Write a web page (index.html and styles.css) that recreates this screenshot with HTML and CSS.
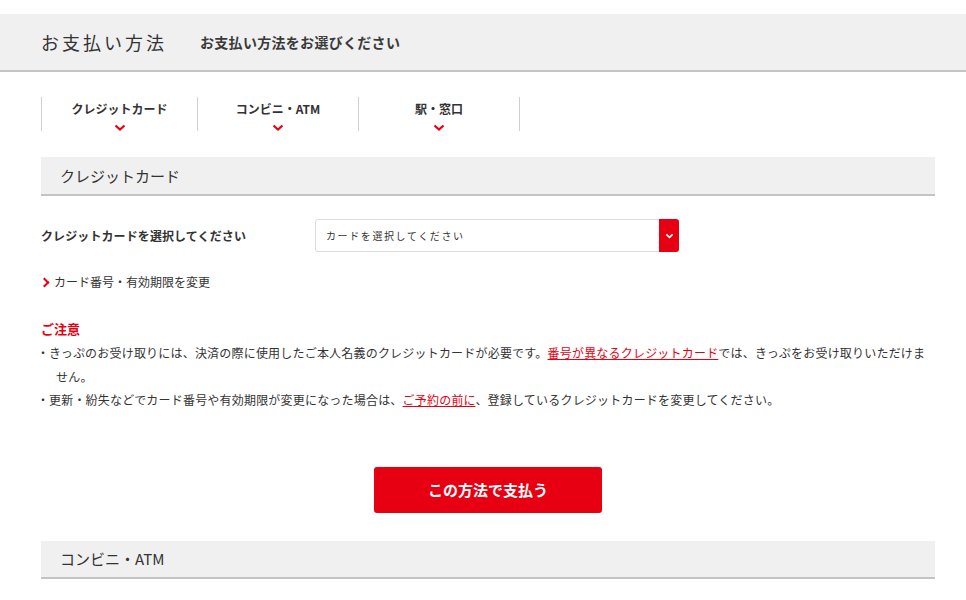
FILE: index.html
```html
<!DOCTYPE html>
<html lang="ja">
<head>
  <meta charset="UTF-8" />
  <title>お支払い方法</title>
  <link rel="stylesheet" href="styles.css">
</head>
<body>

  <header class="page-head">
    <h1>お支払い方法</h1>
    <p>お支払い方法をお選びください</p>
  </header>

  <div class="container">
    <ul class="pay-tabs">
      <li><a href="#card">クレジットカード<svg viewBox="0 0 12 7"><path d="M1.5 1.5 6 5.5 10.5 1.5" /></svg></a></li>
      <li><a href="#cvs">コンビニ・ATM<svg viewBox="0 0 12 7"><path d="M1.5 1.5 6 5.5 10.5 1.5" /></svg></a></li>
      <li><a href="#station">駅・窓口<svg viewBox="0 0 12 7"><path d="M1.5 1.5 6 5.5 10.5 1.5" /></svg></a></li>
    </ul>

    <section id="card">
      <h2 class="section-title">クレジットカード</h2>

      <div class="card-row">
        <label for="cardSelect">クレジットカードを選択してください</label>
        <div class="select-box">
          <select id="cardSelect">
            <option>カードを選択してください</option>
          </select>
          <span class="select-arrow"><svg viewBox="0 0 10 6"><path d="M1.5 1.2 5 4.5 8.5 1.2" /></svg></span>
        </div>
      </div>

      <a class="change-link" href="#">カード番号・有効期限を変更</a>

      <div class="notice">
        <h3>ご注意</h3>
        <ul>
          <li>きっぷのお受け取りには、決済の際に使用したご本人名義のクレジットカードが必要です。<a href="#">番号が異なるクレジットカード</a>では、きっぷをお受け取りいただけません。</li>
          <li>更新・紛失などでカード番号や有効期限が変更になった場合は、<a href="#">ご予約の前に</a>、登録しているクレジットカードを変更してください。</li>
        </ul>
      </div>

      <div class="submit-wrap">
        <button class="pay-button">この方法で支払う</button>
      </div>
    </section>

    <section id="cvs">
      <h2 class="section-title">コンビニ・ATM</h2>
    </section>
  </div>

</body>
</html>
```

FILE: styles.css
```css
* { margin: 0; padding: 0; box-sizing: border-box; }
body {
  font-family: "Noto Sans CJK JP", "Noto Sans", sans-serif;
  color: #333;
  background: #fff;
  padding-top: 14px;
}

a { color: inherit; text-decoration: none; }

.page-head {
  display: flex;
  align-items: center;
  height: 58px;
  padding-left: 41px;
  background: #f0f0f0;
  border-bottom: 2px solid #c4c4c4;
}

.page-head h1 {
  font-size: 18px;
  font-weight: normal;
  letter-spacing: 3px;
  width: 159px;
}

.page-head p {
  font-size: 14px;
  font-weight: bold;
  letter-spacing: 0.3px;
  color: #3a3a3a;
}

.container {
  width: 894px;
  margin-left: 41px;
}

.pay-tabs {
  list-style: none;
  display: grid;
  grid-template-columns: 156px 161px 162px;
  margin-top: 25px;
  height: 34px;
}

.pay-tabs li {
  border-left: 1px solid #d0d0d0;
}

.pay-tabs li:last-child {
  border-right: 1px solid #d0d0d0;
}

.pay-tabs a {
  display: flex;
  flex-direction: column;
  align-items: center;
  font-size: 12px;
  font-weight: bold;
  padding-top: 3px;
  color: #333;
}

.pay-tabs svg {
  width: 12px;
  height: 7px;
  margin-top: 7px;
  fill: none;
  stroke: #e60012;
  stroke-width: 2.2;
}

.section-title {
  font-size: 15px;
  font-weight: normal;
  background: #f0f0f0;
  border-bottom: 2px solid #c4c4c4;
  height: 39px;
  line-height: 37px;
  padding-left: 19px;
  color: #333;
}

#card .section-title {
  margin-top: 26px;
}

.card-row {
  display: flex;
  align-items: center;
  margin-top: 23px;
}

.card-row label {
  width: 274px;
  font-size: 12px;
  font-weight: bold;
  letter-spacing: 0.1px;
}

.select-box {
  position: relative;
  width: 364px;
  height: 33px;
}

.select-box select {
  appearance: none;
  width: 100%;
  height: 100%;
  border: 1px solid #dcdcdc;
  border-radius: 3px;
  background: #fff;
  font-family: inherit;
  font-size: 10px;
  letter-spacing: 1.6px;
  color: #333;
  padding-left: 10px;
  outline: none;
}

.select-arrow {
  position: absolute;
  top: 0;
  right: 0;
  width: 20px;
  height: 33px;
  background: #e60012;
  border-radius: 0 3px 3px 0;
  display: flex;
  align-items: center;
  justify-content: center;
}

.select-arrow svg {
  width: 9px;
  height: 6px;
  fill: none;
  stroke: #fff;
  stroke-width: 1.8;
}

.change-link {
  display: inline-block;
  position: relative;
  margin-top: 21px;
  padding-left: 13px;
  font-size: 12px;
  color: #333;
}

.change-link::before {
  content: "";
  position: absolute;
  left: 0;
  top: 6px;
  width: 5px;
  height: 5px;
  border-top: 2px solid #e60012;
  border-right: 2px solid #e60012;
  transform: rotate(45deg);
}

.notice {
  margin-top: 27px;
}

.notice h3 {
  font-size: 13px;
  font-weight: bold;
  color: #e60012;
  line-height: 20px;
}

.notice ul {
  list-style: none;
  margin-top: 2px;
}

.notice li {
  font-size: 12px;
  letter-spacing: 0.2px;
  line-height: 23.5px;
  padding-left: 15px;
  text-indent: -15px;
  color: #333;
}

.notice li::before {
  content: "・";
  display: inline-block;
  width: 12px;
  text-indent: 0;
  margin-left: -4px;
  letter-spacing: 0;
}

.notice a {
  color: #e60012;
  text-decoration: underline;
}

.submit-wrap {
  display: flex;
  justify-content: center;
  margin-top: 55px;
}

.pay-button {
  width: 228px;
  height: 46px;
  border: none;
  border-radius: 3px;
  background: #e60012;
  color: #fff;
  font-family: inherit;
  font-size: 15px;
  font-weight: bold;
  cursor: pointer;
}

#cvs .section-title {
  margin-top: 28px;
  height: 38px;
  line-height: 36px;
}
```
